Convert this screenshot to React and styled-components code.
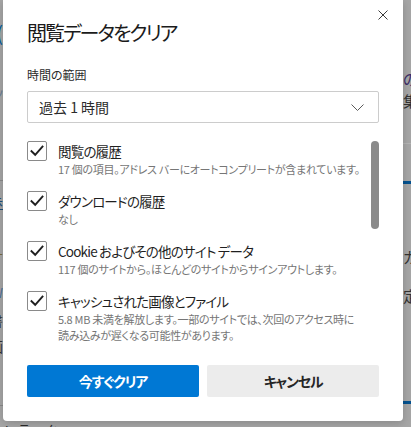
import React from 'react'
import styled, { createGlobalStyle } from 'styled-components'

const GlobalStyle = createGlobalStyle`
    html, body {
        margin: 0;
        padding: 0;
        background: #a6a6a6;
    }
    body {
        font-family: "Noto Sans CJK JP", "Noto Sans", sans-serif;
        font-feature-settings: "palt";
    }
`

const items = [
    { title: '閲覧の履歴', desc: ['17 個の項目。アドレス バーにオートコンプリートが含まれています。'] },
    { title: 'ダウンロードの履歴', desc: ['なし'] },
    { title: 'Cookie およびその他のサイト データ', desc: ['117 個のサイトから。ほとんどのサイトからサインアウトします。'] },
    { title: 'キャッシュされた画像とファイル', desc: ['5.8 MB 未満を解放します。一部のサイトでは、次回のアクセス時に', '読み込みが遅くなる可能性があります。'] },
]

// bits of the page behind the dialog that peek out at the edges
const leftBits = [
    { at: 22, text: '(', color: '#005a9e', size: 20 },
    { at: 86, text: 'ツ', color: '#6a7f95', size: 13 },
    { at: 180, line: '#8a8a8a', h: 1 },
    { at: 194, text: '歩', color: '#1f4f7a', size: 14, underline: true },
    { at: 248, text: 'ナ', color: '#7a6a40', size: 13 },
    { at: 285, text: 'W', color: '#4a6e9a', size: 13 },
    { at: 312, text: '書', color: '#333', size: 14 },
    { at: 338, text: '画', color: '#333', size: 14 },
    { at: 405, line: '#8a8a8a', h: 1 },
]

const rightBits = [
    { at: 70, text: 'の', color: '#3d2d68', size: 15 },
    { at: 92, text: '集', color: '#333', size: 15 },
    { at: 143, line: '#b4b4b4', h: 1 },
    { at: 181, line: '#05528f', h: 3 },
    { at: 248, text: 'カ', color: '#333', size: 15 },
    { at: 287, text: '定', color: '#333', size: 15 },
    { at: 401, line: '#05528f', h: 3 },
]

const withGaps = (bits) => {
    let y = 0
    return bits.map((b) => {
        const gap = b.at - y
        y = b.at + (b.line ? b.h : b.size + 2)
        return { ...b, gap }
    })
}

const Stage = styled.div`
    width: 411px;
    height: 427px;
    display: grid;
    grid-template-columns: 3px 400px 8px;
    grid-template-rows: 421px 6px;
    overflow: hidden;
`

const Strip = styled.div`
    grid-row: 1 / 3;
    grid-column: ${(p) => (p.$side === 'left' ? 1 : 3)};
    display: flex;
    flex-direction: column;
    align-items: ${(p) => (p.$side === 'left' ? 'flex-end' : 'flex-start')};
    overflow: hidden;
    min-width: 0;
`

const Bit = styled.div`
    flex: none;
    margin-top: ${(p) => p.$gap}px;
    font-size: ${(p) => p.$size}px;
    line-height: ${(p) => p.$size + 2}px;
    color: ${(p) => p.$color};
    white-space: nowrap;
    text-decoration: ${(p) => (p.$underline ? 'underline' : 'none')};
`

const BitLine = styled.div`
    flex: none;
    align-self: stretch;
    margin-top: ${(p) => p.$gap}px;
    height: ${(p) => p.$h}px;
    background: ${(p) => p.$color};
`

const BottomPeek = styled.div`
    grid-row: 2;
    grid-column: 2;
    overflow: hidden;
    font-size: 13px;
    line-height: 16px;
    color: #2a2a2a;
    padding-left: 1px;
    padding-top: 1px;
    white-space: nowrap;
`

const Dialog = styled.div`
    grid-row: 1;
    grid-column: 2;
    min-width: 0;
    background: #fff;
    border-radius: 0 0 4px 4px;
    box-shadow: 0 2px 8px rgba(0, 0, 0, 0.18);
    display: flex;
    flex-direction: column;
    color: #1f1f1f;
    position: relative;
    z-index: 1;
`

const Header = styled.div`
    display: flex;
    justify-content: space-between;
    align-items: flex-start;
    padding: 3px 8px 0 24px;
`

const Title = styled.h1`
    margin: 16px 0 0;
    font-size: 20px;
    line-height: 28px;
    font-weight: 400;
    letter-spacing: -2px;
    color: #1b1b1b;
`

const CloseButton = styled.button`
    width: 24px;
    height: 24px;
    padding: 0;
    border: none;
    background: transparent;
    display: flex;
    align-items: center;
    justify-content: center;
`

const Body = styled.div`
    padding: 0 24px;
    display: flex;
    flex-direction: column;
`

const Label = styled.div`
    margin-top: 19px;
    font-size: 12px;
    line-height: 18px;
    color: #2b2b2b;
`

const Select = styled.div`
    margin-top: 7px;
    height: 32px;
    box-sizing: border-box;
    border: 1px solid #cccccc;
    border-radius: 2px;
    display: flex;
    align-items: center;
    justify-content: space-between;
    padding: 0 14px 0 11px;
    font-size: 14px;
    color: #2b2b2b;
`

const ListArea = styled.div`
    margin-top: 18px;
    display: flex;
    gap: 6px;
`

const List = styled.div`
    flex: 1;
    min-width: 0;
    display: flex;
    flex-direction: column;
    gap: 14px;
`

const Item = styled.div`
    display: flex;
    gap: 11px;
`

const Box = styled.div`
    flex: none;
    width: 20px;
    height: 20px;
    box-sizing: border-box;
    border: 1px solid #8a8a8a;
    border-radius: 2px;
    display: flex;
    align-items: center;
    justify-content: center;
`

const ItemText = styled.div`
    display: flex;
    flex-direction: column;
`

const ItemTitle = styled.div`
    font-size: 13.5px;
    line-height: 20px;
    letter-spacing: -0.8px;
    color: #1f1f1f;
    white-space: nowrap;
`

const ItemDesc = styled.div`
    font-size: 11px;
    line-height: 16px;
    letter-spacing: -0.3px;
    color: #767676;
    white-space: nowrap;
`

const ScrollThumb = styled.div`
    flex: none;
    width: 8px;
    height: 88px;
    border-radius: 4px;
    background: #8a8a8a;
`

const Actions = styled.div`
    margin-top: 22px;
    display: grid;
    grid-template-columns: 1fr 1fr;
    gap: 8px;
`

const Button = styled.button`
    height: 32px;
    border: none;
    border-radius: 2px;
    font-family: inherit;
    font-feature-settings: "palt";
    font-size: 14px;
    font-weight: 700;
    letter-spacing: -1.2px;
    background: ${(p) => (p.$primary ? '#0078d4' : '#ececec')};
    color: ${(p) => (p.$primary ? '#ffffff' : '#262626')};
`

const Check = () => (
    <svg width="14" height="12" viewBox="0 0 14 12">
        <path d="M1.5 6.2 L5.2 9.8 L12.5 1.6" fill="none" stroke="#1f1f1f" strokeWidth="1.9" strokeLinecap="square" />
    </svg>
)

const renderBits = (bits) =>
    withGaps(bits).map((b, i) =>
        b.line ? (
            <BitLine key={i} $gap={b.gap} $h={b.h} $color={b.line} />
        ) : (
            <Bit key={i} $gap={b.gap} $size={b.size} $color={b.color} $underline={b.underline}>
                {b.text}
            </Bit>
        )
    )

const App = () => {
    return (
        <>
            <GlobalStyle />
            <Stage>
                <Strip $side="left">{renderBits(leftBits)}</Strip>
                <Dialog>
                    <Header>
                        <Title>閲覧データをクリア</Title>
                        <CloseButton aria-label="閉じる">
                            <svg width="10" height="10" viewBox="0 0 10 10">
                                <path d="M0.5 0.5 L9.5 9.5 M9.5 0.5 L0.5 9.5" stroke="#3a3a3a" strokeWidth="1" />
                            </svg>
                        </CloseButton>
                    </Header>
                    <Body>
                        <Label>時間の範囲</Label>
                        <Select>
                            <span>過去 1 時間</span>
                            <svg width="13" height="7" viewBox="0 0 13 7">
                                <path d="M0.5 0.5 L6.5 6.5 L12.5 0.5" fill="none" stroke="#5a5a5a" strokeWidth="1" />
                            </svg>
                        </Select>
                        <ListArea>
                            <List>
                                {items.map((it) => (
                                    <Item key={it.title}>
                                        <Box>
                                            <Check />
                                        </Box>
                                        <ItemText>
                                            <ItemTitle>{it.title}</ItemTitle>
                                            {it.desc.map((d) => (
                                                <ItemDesc key={d}>{d}</ItemDesc>
                                            ))}
                                        </ItemText>
                                    </Item>
                                ))}
                            </List>
                            <ScrollThumb />
                        </ListArea>
                        <Actions>
                            <Button $primary>今すぐクリア</Button>
                            <Button>キャンセル</Button>
                        </Actions>
                    </Body>
                </Dialog>
                <Strip $side="right">{renderBits(rightBits)}</Strip>
                <BottomPeek>レ ラ ッ ク</BottomPeek>
            </Stage>
        </>
    )
}

export default App
